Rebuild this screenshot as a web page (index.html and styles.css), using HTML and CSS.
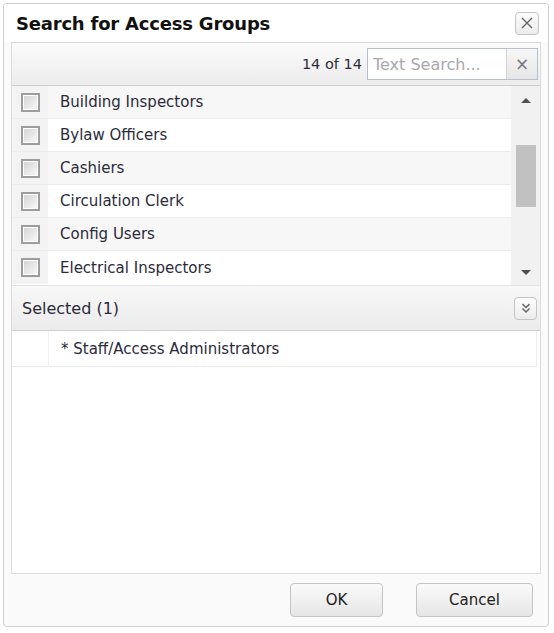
FILE: index.html
```html
<!DOCTYPE html>
<html lang="en">
<head>
    <meta charset="UTF-8">
    <meta name="viewport" content="width=device-width, initial-scale=1.0">
    <title>Search for Access Groups</title>
    <link rel="stylesheet" href="styles.css">
</head>
<body>
    <div class="dialog">
        <div class="dialog-title">
            <h2>Search for Access Groups</h2>
            <span class="icon-btn close">
                <svg width="14" height="14" viewBox="0 0 14 14"><path d="M2 2 L12 12 M12 2 L2 12" stroke="#666" stroke-width="1.4" fill="none"/></svg>
            </span>
        </div>

        <div class="panel">
            <div class="toolbar">
                <span class="count">14 of 14</span>
                <div class="search">
                    <input type="text" placeholder="Text Search...">
                    <span class="clear">&times;</span>
                </div>
            </div>

            <div class="list-wrap">
                <div class="list">
                    <div class="row"><span class="check"><span class="box"></span></span><span class="label">Building Inspectors</span></div>
                    <div class="row"><span class="check"><span class="box"></span></span><span class="label">Bylaw Officers</span></div>
                    <div class="row"><span class="check"><span class="box"></span></span><span class="label">Cashiers</span></div>
                    <div class="row"><span class="check"><span class="box"></span></span><span class="label">Circulation Clerk</span></div>
                    <div class="row"><span class="check"><span class="box"></span></span><span class="label">Config Users</span></div>
                    <div class="row"><span class="check"><span class="box"></span></span><span class="label">Electrical Inspectors</span></div>
                </div>
                <div class="scrollbar">
                    <span class="arrow up"></span>
                    <div class="track"><span class="thumb"></span></div>
                    <span class="arrow down"></span>
                </div>
            </div>

            <div class="selected-head">
                <span>Selected (1)</span>
                <span class="icon-btn toggle">
                    <svg width="10" height="12" viewBox="0 0 10 12"><path d="M1.5 2 L5 5.5 L8.5 2 M1.5 6.5 L5 10 L8.5 6.5" stroke="#666" stroke-width="1.5" fill="none"/></svg>
                </span>
            </div>

            <div class="selected-list">
                <div class="sel-row"><span class="sel-gap"></span><span class="label">* Staff/Access Administrators</span></div>
            </div>
        </div>

        <div class="footer">
            <button class="btn ok">OK</button>
            <button class="btn cancel">Cancel</button>
        </div>
    </div>
</body>
</html>
```

FILE: styles.css
```css
body {
    margin: 0;
    background: #fff;
    font-family: "DejaVu Sans", Verdana, sans-serif;
    font-size: 15px;
    color: #2b2b3a;
}
.dialog {
    margin: 3px 0 0 3px;
    width: 546px;
    height: 624px;
    border: 1px solid #cfcfcf;
    border-radius: 4px;
    padding: 0 7px 6px 7px;
    box-sizing: border-box;
    display: flex;
    flex-direction: column;
    background: #fafafa;
}
.dialog-title {
    height: 38px;
    display: flex;
    align-items: center;
    justify-content: space-between;
    background: #fff;
    margin: 0 -7px;
    padding: 0 9px 0 12px;
    border-radius: 4px 4px 0 0;
}
.dialog-title h2 {
    margin: 0;
    font-size: 18px;
    font-weight: bold;
    color: #111;
    letter-spacing: -0.2px;
}
.icon-btn {
    display: flex;
    align-items: center;
    justify-content: center;
    border: 1px solid #c4c4c4;
    border-radius: 4px;
    background: linear-gradient(#fdfdfd, #ececec);
    box-sizing: border-box;
}
.close {
    width: 24px;
    height: 23px;
}
.panel {
    flex: 1;
    display: flex;
    flex-direction: column;
    border: 1px solid #dcdcdc;
    background: #fff;
}
.toolbar {
    height: 42px;
    display: flex;
    align-items: center;
    justify-content: flex-end;
    padding-right: 2px;
    background: linear-gradient(#fbfbfb, #ececec);
    border-bottom: 1px solid #cfcfcf;
}
.count {
    font-size: 14.5px;
    margin-right: 5px;
}
.search {
    display: flex;
    height: 32px;
    border: 1px solid #b7bfce;
    box-sizing: border-box;
    background: #fff;
}
.search input {
    width: 128px;
    border: 0;
    padding: 0 5px;
    font-family: inherit;
    font-size: 16px;
    outline: none;
    background: transparent;
}
.search input::placeholder {
    color: #a8a8a8;
}
.clear {
    width: 30px;
    display: flex;
    align-items: center;
    justify-content: center;
    border-left: 1px solid #d4d4d4;
    background: linear-gradient(#f7f7f7, #e6e6e6);
    color: #777;
    font-size: 17px;
}
.list-wrap {
    display: flex;
    height: 199px;
    border-bottom: 1px solid #e4e4e4;
}
.list {
    flex: 1;
}
.row {
    display: flex;
    height: 33px;
    box-sizing: border-box;
    border-bottom: 1px solid #ececec;
    background: #fff;
}
.row:nth-child(odd) {
    background: #f7f7f7;
}
.row:last-child {
    border-bottom: 0;
}
.check {
    width: 36px;
    display: flex;
    align-items: center;
    justify-content: center;
    background: #f3f3f3;
}
.box {
    width: 19px;
    height: 19px;
    box-sizing: border-box;
    border: 2px solid #9d9d9d;
    background: linear-gradient(135deg, #d2d2d2, #fafafa);
    box-shadow: inset 0 0 0 1px #fff;
}
.label {
    display: flex;
    align-items: center;
    padding-left: 12px;
}
.scrollbar {
    width: 29px;
    display: flex;
    flex-direction: column;
    align-items: center;
    background: #f1f1f1;
}
.arrow {
    width: 0;
    height: 0;
    border-left: 5px solid transparent;
    border-right: 5px solid transparent;
}
.arrow.up {
    margin-top: 12px;
    border-bottom: 5px solid #505050;
}
.arrow.down {
    margin-bottom: 10px;
    border-top: 5px solid #505050;
}
.track {
    flex: 1;
    width: 100%;
    display: flex;
    justify-content: center;
}
.thumb {
    width: 20px;
    height: 62px;
    margin-top: 42px;
    background: #c1c1c1;
}
.selected-head {
    height: 44px;
    display: flex;
    align-items: center;
    justify-content: space-between;
    padding: 0 3px 0 10px;
    font-size: 16px;
    background: linear-gradient(#f8f8f8, #ebebeb);
    border-bottom: 1px solid #cfcfcf;
}
.toggle {
    width: 23px;
    height: 23px;
}
.selected-list {
    flex: 1;
    background: #fff;
}
.sel-row {
    display: flex;
    height: 35px;
    margin-right: 3px;
    border-right: 1px solid #ececec;
    border-bottom: 1px solid #ececec;
}
.sel-gap {
    width: 36px;
    border-right: 1px solid #f0f0f0;
}
.footer {
    height: 46px;
    display: flex;
    align-items: flex-start;
    justify-content: flex-end;
    gap: 33px;
    padding: 9px 8px 0 0;
    box-sizing: border-box;
}
.btn {
    height: 34px;
    border: 1px solid #c4c4c4;
    border-radius: 4px;
    background: linear-gradient(#fafafa, #e6e6e6);
    font-family: inherit;
    font-size: 15px;
    color: #222;
}
.ok {
    width: 93px;
}
.cancel {
    width: 117px;
}
```
